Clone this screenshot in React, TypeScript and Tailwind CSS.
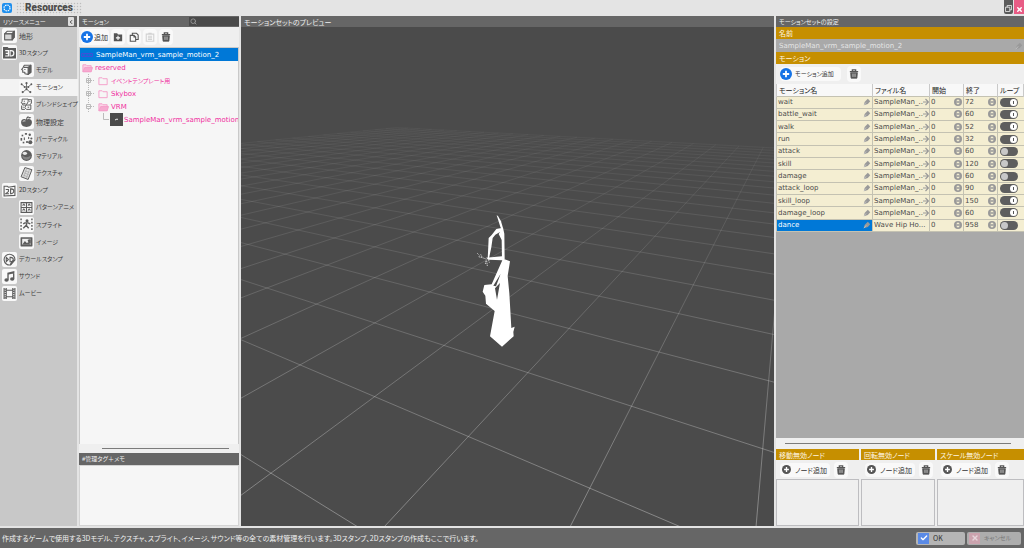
import { useState } from "react";
import type { ReactNode } from "react";
import { ChevronLeft, Search, Check, X } from "lucide-react";

interface MenuItem {
  icon: string;
  label: string;
  child?: boolean;
  kanji?: boolean;
}

interface Motion {
  name: string;
  file: string;
  end: number;
  loop: boolean;
}

const MENU: MenuItem[] = [
  { icon: "terrain", label: "地形", kanji: true },
  { icon: "stamp3d", label: "3Dスタンプ" },
  { icon: "model", label: "モデル", child: true },
  { icon: "motion", label: "モーション", child: true },
  { icon: "blend", label: "ブレンドシェイプ", child: true },
  { icon: "physics", label: "物理設定", child: true, kanji: true },
  { icon: "particle", label: "パーティクル", child: true },
  { icon: "material", label: "マテリアル", child: true },
  { icon: "texture", label: "テクスチャ", child: true },
  { icon: "stamp2d", label: "2Dスタンプ" },
  { icon: "pattern", label: "パターンアニメ", child: true },
  { icon: "sprite", label: "スプライト", child: true },
  { icon: "image", label: "イメージ", child: true },
  { icon: "decal", label: "デカールスタンプ" },
  { icon: "sound", label: "サウンド" },
  { icon: "movie", label: "ムービー" },
];

const MOTIONS: Motion[] = [
  { name: "wait", file: "SampleMan_..", end: 72, loop: true },
  { name: "battle_wait", file: "SampleMan_..", end: 60, loop: true },
  { name: "walk", file: "SampleMan_..", end: 52, loop: true },
  { name: "run", file: "SampleMan_..", end: 32, loop: true },
  { name: "attack", file: "SampleMan_..", end: 60, loop: false },
  { name: "skill", file: "SampleMan_..", end: 120, loop: false },
  { name: "damage", file: "SampleMan_..", end: 60, loop: false },
  { name: "attack_loop", file: "SampleMan_..", end: 90, loop: true },
  { name: "skill_loop", file: "SampleMan_..", end: 150, loop: true },
  { name: "damage_loop", file: "SampleMan_..", end: 60, loop: true },
  { name: "dance", file: "Wave Hip Ho...", end: 958, loop: false },
];

const GLYPHS: Record<string, ReactNode> = {
  terrain: (
    <g fill="none" stroke="currentColor" strokeWidth="2" strokeLinejoin="round">
      <path d="M3 9l5-5h13l-4 5z" />
      <path d="M3 9h14v11H3z" fill="#d5d5d5" />
      <path d="M17 9l4-5v11l-4 5z" fill="currentColor" />
    </g>
  ),
  stamp3d: (
    <g fill="none" stroke="#f8f8f8" strokeWidth="2.2">
      <path d="M1 3h7l2 2h13v17H1z" fill="currentColor" stroke="currentColor" />
      <path d="M4 8.500h6v10H4M5 13.500h5M13 8.500h2q5 0 5 5t-5 5h-2z" />
    </g>
  ),
  stamp2d: (
    <g fill="none" stroke="currentColor" strokeWidth="2">
      <path d="M2 4h6l2 2 12-2v17l-20 1z" />
      <path d="M5 10h5v4l-5 4h6M14 9h1q5 0 5 4t-5 5h-1z" />
    </g>
  ),
  model: (
    <g fill="none" stroke="currentColor" strokeWidth="2" strokeLinejoin="round">
      <path d="M8 4h12v13l-5 4-6-1v-3H5v-4l-2-1 3-4z" />
      <path d="M15 8l5-4v13l-5 4z" fill="currentColor" />
      <path d="M7 8h8M8 12h2" />
    </g>
  ),
  motion: (
    <g fill="none" stroke="currentColor" strokeWidth="1.500">
      <path d="M3 6l6 5h6l6-5M12 4v11M12 15l-6 5M12 15l6 5" />
      <g fill="currentColor" stroke="none">
        <circle cx="12" cy="4" r="2" /><circle cx="3" cy="6" r="1.700" /><circle cx="21" cy="6" r="1.700" />
        <circle cx="8.500" cy="11" r="1.700" /><circle cx="15.500" cy="11" r="1.700" /><circle cx="12" cy="15" r="2" />
        <circle cx="5" cy="20.500" r="2" /><circle cx="19" cy="20.500" r="2" />
      </g>
    </g>
  ),
  blend: (
    <g fill="none" stroke="currentColor" strokeWidth="1.800" strokeLinejoin="round">
      <path d="M4 2h11v5l-2 4-3 2H5v-3L2 9l2-3zM7 6h2M6 10h4" />
      <path d="M15 3h6v7l-3 2M11 13h9v8h-8l-3-3zM14 17h3M3 14v7h6M5 17h2M17 6h2" />
    </g>
  ),
  physics: (
    <g fill="currentColor">
      <path d="M12 9c3-3 10-2 10 4s-4 9-10 9S2 19 2 13s7-7 10-4z" />
      <path d="M11 9q0-5 4-7l1 1q-3 2-3 6zM14 5q4-3 7 0-4 3-7 0z" />
      <path d="M5 12q2-2 5-1" stroke="#eee" strokeWidth="1.500" fill="none" />
    </g>
  ),
  particle: (
    <g fill="currentColor">
      <rect x="3" y="5" width="3" height="3" /><rect x="9" y="2" width="4" height="3" />
      <circle cx="18" cy="5" r="2.200" /><rect x="1" y="11" width="3" height="5" />
      <rect x="7" y="10" width="2" height="5" /><rect x="15" y="9" width="2" height="4" />
      <circle cx="21" cy="12" r="2" /><rect x="5" y="18" width="3" height="3" />
      <rect x="11" y="17" width="4" height="3" /><circle cx="19" cy="19" r="3.800" />
    </g>
  ),
  material: (
    <g>
      <circle cx="12" cy="12" r="10" fill="currentColor" />
      <path d="M4 12q8 6 16 0-1 8-8 8-7 0-8-8z" fill="#858585" />
      <ellipse cx="9" cy="8" rx="4" ry="3" fill="#e8e8e8" />
    </g>
  ),
  texture: (
    <g fill="none" stroke="currentColor" strokeWidth="1.800" strokeLinejoin="round">
      <path d="M9 1l13 4-7 18-13-5z" fill="#ddd" />
      <path d="M9 7l8 3M8 11l8 3M6 15l8 3M12 4L7 18M17 6l-5 14" strokeWidth="1" stroke="#999" />
    </g>
  ),
  pattern: (
    <g fill="none" stroke="currentColor" strokeWidth="2">
      <path d="M2 3h20v18H2zM12 3v18M2 12h20" />
      <path d="M5 9l2-4 2 4M15 9l2-4 2 4M5 18l2-4 2 4M15 18l2-4 2 4M5 7h4M15 7h4M5 16h4M15 16h4" strokeWidth="1.500" />
    </g>
  ),
  sprite: (
    <g fill="none" stroke="currentColor" strokeWidth="2.600">
      <path d="M2 1v22M22 1v22" strokeDasharray="3 3" />
      <circle cx="13" cy="5" r="1.500" fill="currentColor" />
      <path d="M6 11l3-2h6l4 2M12 9v5l4 5M12 13l-6 6" />
    </g>
  ),
  image: (
    <g>
      <rect x="1" y="4" width="22" height="17" rx="1" fill="currentColor" />
      <path d="M4 7h16v11H4z" fill="#ededed" />
      <path d="M4 18l5-7 4 4 2-2 5 5z" fill="currentColor" />
      <path d="M14 9l3-1h3v8l-4-1z" fill="currentColor" />
    </g>
  ),
  decal: (
    <g fill="none" stroke="currentColor" strokeWidth="2">
      <path d="M22 13a10 10 0 1 0-8 9z" />
      <path d="M14 22q0-6 8-9" fill="currentColor" />
      <path d="M6 8v8l4-4zM13 8h1q5 0 5 4t-5 4h-1z" />
    </g>
  ),
  sound: (
    <g fill="currentColor">
      <path d="M8 5l13-3v4L10.500 8.500V18H8zM18.500 4H21v12h-2.500z" />
      <ellipse cx="6.500" cy="18.500" rx="4" ry="3.300" /><ellipse cx="17" cy="16.500" rx="4" ry="3.300" />
    </g>
  ),
  movie: (
    <g fill="none" stroke="currentColor" strokeWidth="2">
      <path d="M2 2v20M6 2v20M18 2v20M22 2v20M6 6h12M6 18h12" />
      <path d="M4 3v19M20 3v19" strokeWidth="3" strokeDasharray="2 2" />
    </g>
  ),
};

const FLAT_BUTTON = "flex h-4 w-[14px] items-center justify-center rounded-sm bg-[#f9f9f9]";
const GOLD_BAR = "flex items-center bg-[#c68f00] pl-[3px] text-[7px] text-[#fff6e0]";
const DARK_BAR = "flex h-[11px] shrink-0 items-center bg-[#666] pl-[3px] text-[#f0f0f0]";
const LATIN = "font-[DejaVu_Sans,Noto_Sans_CJK_JP,sans-serif] text-[7px]";

function TrashIcon() {
  return (
    <svg viewBox="0 0 12 12" className="h-[10px] w-[10px]" fill="none" stroke="#555">
      <path d="M1 3h10M4 2.500V1h4v1.500" strokeWidth="1.500" />
      <path d="M2 4.500h8L9.500 11h-7z" fill="#555" />
      <path d="M4.500 5.500v4M6 5.500v4M7.500 5.500v4" stroke="#eee" strokeWidth=".6" />
    </svg>
  );
}

function PlusIcon({ color, className }: { color: string; className: string }) {
  return (
    <svg viewBox="0 0 12 12" className={className}>
      <circle cx="6" cy="6" r="6" fill={color} />
      <path d="M6 2.800v6.400M2.800 6h6.400" stroke="#fff" strokeWidth="1.800" />
    </svg>
  );
}

function FolderIcon({ open }: { open?: boolean }) {
  return (
    <svg viewBox="0 0 12 10" className="h-[10px] w-[11px] shrink-0" stroke="#f49cc8" strokeLinejoin="round">
      <path d="M1 9V1.500h3.500l1 1H10V9z" fill={open ? "#fbd3e6" : "none"} />
      {open && <path d="M1 9l2-4.500h8.500L10 9z" fill="#f6abd0" />}
    </svg>
  );
}

function PenIcon() {
  return (
    <svg viewBox="0 0 10 10" className="h-2 w-2 shrink-0">
      <path d="M1 9l1-4 4-4 3 3-3 3.500z" fill="#999" />
      <path d="M1 9l3-3.500" stroke="#ddd" strokeWidth=".7" />
    </svg>
  );
}

function SideMenu() {
  const [active, setActive] = useState("motion");
  return (
    <nav className="mr-0.5 w-[77px] shrink-0 bg-[#c8c8c8]">
      <div className="flex h-[11px] items-center justify-between bg-[#666] px-[3px] text-[#f0f0f0]">
        リソースメニュー
        <button type="button" aria-label="閉じる" className="flex h-[9px] w-[6px] items-center justify-center rounded-[1px] bg-[#ddd] text-[#444]">
          <ChevronLeft className="h-2 w-2" strokeWidth={4} />
        </button>
      </div>
      <div className="grid h-[275px] auto-rows-fr">
        {MENU.map((m) => (
          <button
            key={m.icon}
            type="button"
            onClick={() => setActive(m.icon)}
            className={`flex items-center gap-[2px] text-left whitespace-nowrap text-[#3c3c3c] ${m.child ? "pl-[19px]" : "pl-[2px]"} ${m.kanji ? "text-[7px]" : ""} ${active === m.icon ? "bg-[#f3f3f3]" : ""}`}
          >
            <span className="flex h-[15px] w-[15px] shrink-0 items-center justify-center rounded-xs bg-[#f8f8f8] text-[#5c5c5c]">
              <svg viewBox="0 0 24 24" className="h-[13px] w-[13px]">{GLYPHS[m.icon]}</svg>
            </span>
            {m.label}
          </button>
        ))}
      </div>
    </nav>
  );
}

function Expander({ open }: { open?: boolean }) {
  return (
    <svg viewBox="0 0 11 13" className="h-[13px] w-[11px] shrink-0" fill="none" stroke="#bbb">
      <path d="M3.500 0v4M3.500 9v4M6 6.500h4" strokeDasharray="1 1" />
      <path d="M1.500 4.500h4v4h-4zM2 6.500h3" />
      {!open && <path d="M3.500 5v3" />}
    </svg>
  );
}

function ResourceTree() {
  return (
    <section className="mr-0.5 flex w-[160px] shrink-0 flex-col bg-[#efefef]">
      <div className="flex h-[11px] shrink-0 items-center justify-between bg-[#666] pl-[3px] text-[#f0f0f0]">
        モーション
        <label className="flex h-[9px] w-[50px] items-center bg-[#4a4a4a] pl-px">
          <Search className="h-[7px] w-[7px] shrink-0 text-[#999]" strokeWidth={3} />
          <input aria-label="検索" className="w-full min-w-0 outline-none" />
        </label>
      </div>
      <div className="flex h-5 shrink-0 items-center gap-[2px] pl-[2px]">
        <button type="button" className="flex h-4 w-7 items-center gap-px rounded-sm bg-[#f9f9f9] text-[7px] whitespace-nowrap">
          <PlusIcon color="#1673e6" className="h-3 w-3 shrink-0" />
          追加
        </button>
        <button type="button" aria-label="フォルダ追加" className={FLAT_BUTTON}>
          <svg viewBox="0 0 12 12" className="h-[10px] w-[10px]">
            <path d="M1 1.500h4l1 1.500h5v8H1z" fill="#555" />
            <path d="M6 4.500v5M3.500 7h5" stroke="#fff" strokeWidth="1.300" />
          </svg>
        </button>
        <button type="button" aria-label="複製" className={FLAT_BUTTON}>
          <svg viewBox="0 0 12 12" className="h-[10px] w-[10px]" fill="#f8f8f8" stroke="#555" strokeWidth="1.300">
            <path d="M4 4V1.500h5l2 2V9H8" />
            <path d="M1.500 4H6l2 2v5H1.500zM6 4v2h2" />
          </svg>
        </button>
        <button type="button" aria-label="貼り付け" disabled className={FLAT_BUTTON}>
          <svg viewBox="0 0 12 12" className="h-[10px] w-[10px]" fill="none" stroke="#d2d2d2" strokeWidth="1.300">
            <path d="M1.500 2.500h9V11h-9zM4 1.500h4M3.500 5h5M3.500 7h5M3.500 9h5" />
          </svg>
        </button>
        <button type="button" aria-label="削除" className={FLAT_BUTTON}>
          <TrashIcon />
        </button>
      </div>
      <ul className="flex min-h-0 flex-1 flex-col overflow-hidden border-x border-t border-[#c9c9c9] bg-[#f6f6f6] text-[#f02fa0]">
        <li className={`flex h-[13px] shrink-0 items-center gap-[3px] bg-[#0078d7] pl-px text-white ${LATIN}`}>
          <svg viewBox="0 0 12 6" className="h-[6px] w-[12px]" fill="none" stroke="#3f50d8">
            <path d="M.5 1.500h11v3H.5zM3 1.500v3M6 1.500v3M9 1.500v3" />
          </svg>
          SampleMan_vrm_sample_motion_2
        </li>
        <li className={`flex h-[13px] shrink-0 items-center gap-[2px] pl-[2px] ${LATIN}`}>
          <FolderIcon open />
          reserved
        </li>
        <li className="flex h-[13px] shrink-0 items-center gap-[2px] pl-[5px]">
          <Expander />
          <FolderIcon />
          イベントテンプレート用
        </li>
        <li className={`flex h-[13px] shrink-0 items-center gap-[2px] pl-[5px] ${LATIN}`}>
          <Expander />
          <FolderIcon />
          Skybox
        </li>
        <li className={`flex h-[13px] shrink-0 items-center gap-[2px] pl-[5px] ${LATIN}`}>
          <Expander open />
          <FolderIcon open />
          VRM
        </li>
        <li className={`flex h-[13px] shrink-0 items-center gap-px pl-[23px] whitespace-nowrap ${LATIN}`}>
          <svg viewBox="0 0 6 13" className="h-[13px] w-[6px] shrink-0" fill="none" stroke="#bbb">
            <path d="M.5 0v6.500H6" />
          </svg>
          <svg viewBox="0 0 13 13" className="h-[13px] w-[13px] shrink-0">
            <rect width="13" height="13" fill="#4b4b4b" />
            <path d="M5 7l2-1 1 .5" stroke="#eee" fill="none" />
          </svg>
          SampleMan_vrm_sample_motion
        </li>
      </ul>
      <div className="flex h-[9px] shrink-0 items-center pr-[10px] pl-[23px]">
        <div className="h-px flex-1 bg-[#7b7b7b]" />
      </div>
      <label htmlFor="memo" className="flex h-3 shrink-0 items-center bg-[#666] pl-[3px] text-[#f0f0f0]">
        #管理タグ＋メモ
      </label>
      <textarea id="memo" className="h-[61px] shrink-0 resize-none border border-[#d4d4d4] bg-[#f6f6f6] outline-none" />
    </section>
  );
}

// Ground plane: both line families are evenly spaced along the bottom edge
// and run to their own vanishing point on the horizon.
const HORIZON = 60;
const BOTTOM = 500;
const LEFT_VP = -594;
const RIGHT_VP = 553;
const FAR_ROW = 23;
const FAR_COL = -20;
const rowFoot = (k: number) => 117 + 323 * k;
const colFoot = (j: number) => -43 + 186 * j;

function cross(j: number, k: number) {
  const a = rowFoot(k) - LEFT_VP;
  const b = colFoot(j) - RIGHT_VP;
  const t = (RIGHT_VP - LEFT_VP) / (a - b);
  return { x: LEFT_VP + a * t, y: HORIZON + (BOTTOM - HORIZON) * t };
}

function GroundGrid() {
  const rows = Array.from({ length: FAR_ROW + 1 }, (_, k) => ({ from: cross(FAR_COL, k), foot: rowFoot(k) }));
  const cols = Array.from({ length: 24 }, (_, i) => ({ from: cross(FAR_COL + i, FAR_ROW), foot: colFoot(FAR_COL + i) }));
  return (
    <g stroke="url(#fade)">
      {[...rows, ...cols].map((l, i) => (
        <line key={i} x1={l.from.x} y1={l.from.y} x2={l.foot} y2={BOTTOM} />
      ))}
    </g>
  );
}

function Preview() {
  return (
    <main className="mr-0.5 flex min-w-0 flex-1 flex-col bg-[#4b4b4b]">
      <div className={`text-[7px] ${DARK_BAR}`}>モーションセットのプレビュー</div>
      <div className="min-h-0 flex-1 overflow-hidden">
        <svg viewBox="0 0 533 499" preserveAspectRatio="xMidYMid slice" className="h-full w-full">
          <defs>
            <linearGradient id="fade" gradientUnits="userSpaceOnUse" x1="0" y1="100" x2="0" y2="499">
              <stop offset="0" stopColor="#fff" stopOpacity=".03" />
              <stop offset=".3" stopColor="#fff" stopOpacity=".11" />
              <stop offset=".6" stopColor="#fff" stopOpacity=".22" />
              <stop offset="1" stopColor="#fff" stopOpacity=".34" />
            </linearGradient>
          </defs>
          <GroundGrid />
          <g transform="translate(199 173) scale(.33333)" fill="#fff">
            <path d="M170 46l4 2 9 16 6 20-2 10-6-14z" />
            <path d="M155 105l14-18 20-4 4 18 1 76-8 1-1-58-9-18 4-6-14 8-8 10-4 28-8 38-3-2 3-64z" />
            <path d="M138 173l48-4 6 8 18 7-7 44 5 52 6 104 10-4-4 16 1 13-35 31-36-31 14-76-26-22-2-24-8-12 5-20 22-2 32-72-40-2zM165 265l6 34 9-50zM160 257l8 2 14-38z" fillRule="evenodd" />
            <path d="M112 160l6 6M116 170l14 4 10 4M122 163l4 8M138 182l-2 10M140 182l2 16M146 180l2 8" stroke="#ccc" strokeWidth="3" fill="none" strokeDasharray="4 2" />
          </g>
        </svg>
      </div>
    </main>
  );
}

function SpinIcon() {
  return (
    <svg viewBox="0 0 10 10" className="h-2 w-2">
      <circle cx="5" cy="5" r="5" fill="#999" />
      <path d="M2.500 4.200h5L5 1.500zM2.500 5.800h5L5 8.500z" fill="#f4eed2" />
    </svg>
  );
}

function NumberCell({ label, value }: { label: string; value: number }) {
  return (
    <td className="border border-[#c4c2b2] p-0">
      <div className="flex items-center pr-px pl-px">
        <input aria-label={label} defaultValue={value} className="h-[10px] w-full min-w-0 outline-none" />
        <button type="button" aria-label={`${label}を変更`} className="shrink-0">
          <SpinIcon />
        </button>
      </div>
    </td>
  );
}

function MotionTable() {
  const [motions, setMotions] = useState(MOTIONS);

  const toggleLoop = (index: number) => {
    setMotions(motions.map((m, i) => (i === index ? { ...m, loop: !m.loop } : m)));
  };

  return (
    <table className="h-[148px] w-full table-fixed border-collapse text-[7px] text-[#4c4c4c]">
      <colgroup>
        <col />
        <col className="w-[57px]" />
        <col className="w-[34px]" />
        <col className="w-[34px]" />
        <col className="w-[26px]" />
      </colgroup>
      <thead>
        <tr className="h-3 bg-[#f8f8f8] text-left text-[#222]">
          {["モーション名", "ファイル名", "開始", "終了", "ループ"].map((h) => (
            <th key={h} className="border-x border-[#c9c9c9] py-0 pr-0 pl-[2px] font-normal whitespace-nowrap">
              {h}
            </th>
          ))}
        </tr>
      </thead>
      <tbody className={LATIN}>
        {motions.map((m, i) => (
          <tr key={m.name} className="bg-[#f4eed2]">
            <td className={`border border-[#c4c2b2] p-0 ${m.name === "dance" ? "bg-[#0078d7] text-white" : ""}`}>
              <div className="flex items-center pr-px pl-px">
                <input aria-label="モーション名" defaultValue={m.name} className="h-[10px] w-full min-w-0 outline-none" />
                <PenIcon />
              </div>
            </td>
            <td className="border border-[#c4c2b2] p-0">
              <div className="flex items-center justify-between pl-px whitespace-nowrap">
                {m.file}
                {m.name !== "dance" && (
                  <button type="button" aria-label="ファイルを開く" className="shrink-0">
                    <svg viewBox="0 0 6 8" className="h-2 w-[6px]" fill="none" stroke="#999" strokeWidth="1.200">
                      <path d="M0 4h5M2.500 1l3 3-3 3" />
                    </svg>
                  </button>
                )}
              </div>
            </td>
            <NumberCell label="開始" value={0} />
            <NumberCell label="終了" value={m.end} />
            <td className="border border-r-0 border-[#c4c2b2] p-0">
              <input
                type="checkbox"
                aria-label={`${m.name} ループ`}
                checked={m.loop}
                onChange={() => toggleLoop(i)}
                className="ml-[2px] flex h-[9px] w-[18px] appearance-none items-center rounded-full bg-[#5e5e5e] px-px before:h-[7px] before:w-[7px] before:rounded-full before:bg-[#c8c8c8] before:bg-center before:bg-no-repeat before:bg-size-[1px_3px] checked:justify-end checked:before:bg-white checked:before:bg-[linear-gradient(#555,#555)]"
              />
            </td>
          </tr>
        ))}
      </tbody>
    </table>
  );
}

function NodePanel({ title, className }: { title: string; className: string }) {
  return (
    <div className={`flex flex-col ${className}`}>
      <div className={`h-[11px] ${GOLD_BAR}`}>{title}</div>
      <div className="flex h-[19px] items-center gap-1 pl-1">
        <button type="button" className="flex h-[14px] w-[50px] items-center gap-1 rounded-sm bg-[#f9f9f9] pl-[2px] text-[7px] whitespace-nowrap">
          <PlusIcon color="#555" className="h-[9px] w-[9px] shrink-0" />
          ノード追加
        </button>
        <button type="button" aria-label="削除" className={FLAT_BUTTON}>
          <TrashIcon />
        </button>
      </div>
      <div className="h-[47px] border border-[#bdbdc0] bg-[#efefef]" />
    </div>
  );
}

function Settings() {
  return (
    <aside className="flex w-[248px] shrink-0 flex-col bg-[#efefef]">
      <div className={DARK_BAR}>モーションセットの設定</div>
      <label htmlFor="set-name" className={`h-3 shrink-0 ${GOLD_BAR}`}>名前</label>
      <div className="flex h-[13px] shrink-0 items-center bg-[#a9a9a9] pr-px pl-[3px]">
        <input
          id="set-name"
          readOnly
          value="SampleMan_vrm_sample_motion_2"
          className={`w-full text-[#e4e4e4] outline-none ${LATIN}`}
        />
        <PenIcon />
      </div>
      <div className={`h-3 shrink-0 ${GOLD_BAR}`}>モーション</div>
      <div className="flex h-5 shrink-0 items-center gap-[6px] pl-1">
        <button type="button" className="flex h-[14px] w-[61px] items-center gap-[3px] rounded-sm bg-[#f9f9f9] whitespace-nowrap">
          <PlusIcon color="#1673e6" className="h-3 w-3 shrink-0" />
          モーション追加
        </button>
        <button type="button" aria-label="削除" className={FLAT_BUTTON}>
          <TrashIcon />
        </button>
      </div>
      <div className="min-h-0 flex-1 bg-[#a9a9a9]">
        <MotionTable />
      </div>
      <div className="flex h-[11px] shrink-0 items-center pr-[13px] pl-[9px]">
        <div className="h-px flex-1 bg-[#7b7b7b]" />
      </div>
      <div className="flex shrink-0 gap-[2px]">
        <NodePanel title="移動無効ノード" className="w-[83px]" />
        <NodePanel title="回転無効ノード" className="w-[74px]" />
        <NodePanel title="スケール無効ノード" className="flex-1" />
      </div>
    </aside>
  );
}

export default function App() {
  return (
    <div className="flex h-screen flex-col overflow-hidden bg-[#e4e4e4] font-[Noto_Sans_CJK_JP,sans-serif] text-[6px] leading-[10px] text-[#333] [font-feature-settings:'palt']">
      <header className="flex h-4 shrink-0 justify-between pl-[2px]">
        <div className="flex items-center gap-[4px]">
          <svg viewBox="0 0 10 10" className="h-[10px] w-[10px]">
            <rect width="10" height="10" rx="2" fill="#1f8fee" />
            <circle cx="5" cy="5" r="3" fill="none" stroke="#fff" strokeWidth="1.200" strokeDasharray="1.500 .85" />
          </svg>
          <h1 className="flex h-[13px] w-[66px] items-center justify-center bg-[radial-gradient(#bdbdbd_30%,transparent_50%)] bg-size-[3px_3px] font-[Roboto,sans-serif] text-[10px] font-black text-[#4c4c4c]">
            Resources
          </h1>
        </div>
        <div className="flex h-[14px] gap-px">
          <button type="button" aria-label="元に戻す" className="flex w-[9px] items-end justify-center rounded-b-xs bg-[#5a5a5a] pb-[2px]">
            <svg viewBox="0 0 8 8" className="h-[7px] w-[7px]" fill="none" stroke="#e8e8e8">
              <path d="M2.500 2.500v-2h5v5h-2M.5 2.500h5v5h-5z" />
            </svg>
          </button>
          <button type="button" aria-label="閉じる" className="flex w-[10px] items-end justify-center bg-[#e85c85] pb-px text-white">
            <X className="h-[7px] w-[7px]" strokeWidth={5} />
          </button>
        </div>
      </header>
      <div className="flex min-h-0 flex-1">
        <SideMenu />
        <ResourceTree />
        <Preview />
        <Settings />
      </div>
      <footer className="mt-0.5 flex h-5 shrink-0 items-center justify-between bg-[#666] pr-[3px] pl-[2px] text-[7px] text-[#f0f0f0]">
        作成するゲームで使用する3Dモデル、テクスチャ、スプライト、イメージ、サウンド等の全ての素材管理を行います。3Dスタンプ、2Dスタンプの作成もここで行います。
        <div className="flex gap-[2px] text-[#333]">
          <button type="button" className="flex h-[13px] w-[49px] items-center gap-1 rounded-xs bg-[#b5b5b5] pl-[2px]">
            <span className="flex h-[11px] w-[11px] items-center justify-center bg-[#5a8ae6] text-white">
              <Check className="h-2 w-2" strokeWidth={4} />
            </span>
            OK
          </button>
          <button type="button" className="flex h-[13px] w-[54px] items-center gap-1 rounded-xs bg-[#adadad] pl-[2px] text-[6px] whitespace-nowrap text-[#777]">
            <span className="flex h-[11px] w-[11px] items-center justify-center bg-[#cba3ae] text-[#e6d5da]">
              <X className="h-2 w-2" strokeWidth={4} />
            </span>
            キャンセル
          </button>
        </div>
      </footer>
    </div>
  );
}
